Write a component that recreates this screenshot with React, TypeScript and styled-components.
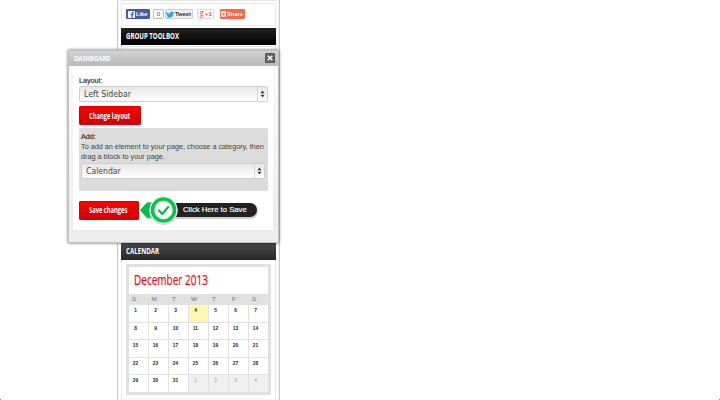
import React from "react";
import styled, { createGlobalStyle } from "styled-components";

const GlobalStyle = createGlobalStyle`
  * { box-sizing: border-box; }
  html, body, #root { height: 100%; margin: 0; }
  body {
    background: #fff;
    overflow: hidden;
    font-family: "Liberation Sans", Arial, sans-serif;
    font-size: 7px;
    color: #444;
  }
`;

const Page = styled.div`
  position: relative;
  height: 400px;
  overflow: hidden;
`;

const Column = styled.main`
  width: 163px;
  height: 400px;
  margin-left: 117px;
  padding: 0 3px;
  border: solid #c9c9c9;
  border-width: 0 1px;
  box-shadow: inset 0 0 2px #ddd;
`;

const PreviousPanel = styled.div`
  height: 1px;
  margin-bottom: 2px;
  background: #e4e4e4;
`;

const ShareBar = styled.div`
  display: flex;
  align-items: flex-start;
  height: 23px;
  margin-bottom: 2px;
  padding: 5px 0 0 4px;
  border: 1px solid #e9e9e9;
`;

const ShareButton = styled.span<{ $w: number; $bg: string; $fg: string; $line: string; $gap: number }>`
  display: flex;
  align-items: center;
  justify-content: center;
  gap: 1px;
  width: ${(p) => p.$w}px;
  height: 10px;
  margin-right: ${(p) => p.$gap}px;
  border: 1px solid ${(p) => p.$line};
  border-radius: 1px;
  background: ${(p) => p.$bg};
  color: ${(p) => p.$fg};
  font-size: 6px;
  font-weight: bold;
  line-height: 9px;
  white-space: nowrap;
`;

const Count = styled(ShareButton)`
  border-radius: 2px;
  font-weight: normal;
`;

const Narrow = styled.span<{ $x: number }>`
  display: inline-block;
  white-space: nowrap;
  transform: scaleX(${(p) => p.$x});
  transform-origin: left center;
`;

const PanelTitle = styled.h2<{ $from: string; $to: string }>`
  height: 17px;
  margin: 0;
  padding-left: 5px;
  background: linear-gradient(${(p) => p.$from}, ${(p) => p.$to});
  color: #fff;
  font: bold 8.3px/15px "Open Sans", sans-serif;
`;

const GroupPanel = styled.section`
  height: 197px;
  margin-top: 1px;
  border: 1px solid #e9e9e9;
`;

const CalendarPanel = styled.section`
  height: 141px;
  padding: 4px 4px 0;
  border: solid #e9e9e9;
  border-width: 0 1px;
`;

const Calendar = styled.div`
  width: 145px;
  height: 131px;
  padding: 3px;
  background: #e1e1e1;
`;

const Month = styled.h3`
  height: 27px;
  margin: 0;
  padding-left: 5px;
  background: #fff;
  color: #f8060c;
  font: 400 14.5px/26px "Open Sans", sans-serif;
  -webkit-text-stroke: 0.2px #f8060c;
`;

const Weekdays = styled.div`
  display: grid;
  grid-template-columns: repeat(7, 1fr);
  gap: 1px;
  height: 11px;
  color: #858585;
  font-size: 6.2px;
  line-height: 10px;
  text-align: center;
  -webkit-text-stroke: 0.15px #858585;
`;

const Weekday = styled.span`
  padding-right: 9px;
`;

const Days = styled.div`
  display: grid;
  grid-template-columns: repeat(7, 1fr);
  grid-auto-rows: 16.6px;
  gap: 1px;
`;

const Day = styled.span<{ $today?: boolean; $other?: boolean }>`
  padding-right: 6px;
  background: ${(p) => (p.$today ? "#fff6b2" : p.$other ? "#f0f0f0" : "#fff")};
  color: ${(p) => (p.$other ? "#999" : "#222")};
  font-size: 4.8px;
  font-weight: ${(p) => (p.$other ? "normal" : "bold")};
  line-height: 11px;
  text-align: center;
`;

const Dialog = styled.section`
  position: absolute;
  left: 68px;
  top: 50px;
  width: 211px;
  height: 193px;
  border: 1px solid #c4c4c4;
  background: linear-gradient(#fafafa, #ececec);
  box-shadow: 0 0 3px rgba(0, 0, 0, 0.6);
`;

const DialogHeader = styled.header`
  display: flex;
  justify-content: space-between;
  height: 15px;
  padding: 0 3px 0 5px;
  background: linear-gradient(#d2d2d2, #b9b9b9);
  color: #fff;
  font: bold 7.8px/15px "Open Sans", sans-serif;
`;

const Close = styled.button`
  display: grid;
  place-items: center;
  width: 10px;
  height: 10px;
  margin-top: 2px;
  padding: 0;
  border: 1px solid #555;
  border-radius: 1px;
  background: #626262;
`;

const DialogBody = styled.div`
  width: 200px;
  height: 164px;
  margin-left: 4px;
  padding: 10px 5px 0 6px;
  background: #fff;
`;

const Label = styled.div`
  height: 9px;
  color: #333;
  font-size: 7.2px;
  line-height: 9px;
  -webkit-text-stroke: 0.2px #333;
`;

const Select = styled.div<{ $w: number; $top: number }>`
  display: flex;
  justify-content: space-between;
  width: ${(p) => p.$w}px;
  height: 16px;
  margin-top: ${(p) => p.$top}px;
  padding-left: 4px;
  border: 1px solid #cecece;
  border-radius: 2px;
  background: linear-gradient(#e7e7e7, #fff);
  color: #444;
  font: 8.6px/14px "DejaVu Sans", sans-serif;
`;

const Arrows = styled.span`
  display: grid;
  place-items: center;
  width: 10px;
  border-left: 1px solid #d5d5d5;
`;

const RedButton = styled.button<{ $w: number }>`
  display: block;
  flex: none;
  width: ${(p) => p.$w}px;
  height: 19px;
  padding: 0 0 0 9px;
  border: 1px solid #d80000;
  border-radius: 1px;
  background: linear-gradient(#fa0000, #d60000);
  color: #fff;
  text-align: left;
  font: bold 8px/16px "Open Sans", sans-serif;
`;

const ChangeRow = styled.div`
  margin-top: 4px;
`;

const AddBox = styled.div`
  width: 189px;
  height: 63px;
  margin-top: 3px;
  padding: 4px 2px;
  border-radius: 2px;
  background: #dcdcdc;
`;

const Hint = styled.p`
  margin: 1px 0 0;
  color: #444;
  font-size: 7.25px;
  line-height: 9.5px;
  white-space: nowrap;
`;

const SaveRow = styled.div`
  display: flex;
  align-items: center;
  height: 32px;
  margin-top: 3px;
`;

const SaveTip = styled.div`
  display: flex;
  align-items: center;
  margin-left: 1px;
`;

const TipMark = styled.svg`
  position: relative;
  z-index: 1;
  flex: none;
  width: 40px;
  height: 32px;
`;

const TipText = styled.span`
  width: 85px;
  height: 14px;
  margin-left: -8px;
  padding-left: 11px;
  border-radius: 0 8px 8px 0;
  background: #222;
  box-shadow: 0 1px 1px 1px #ccc;
  color: #fff;
  font-size: 7.7px;
  line-height: 14px;
  white-space: nowrap;
  -webkit-text-stroke: 0.15px #fff;
`;

const CornerSpeck = styled.i<{ $side: "left" | "right" }>`
  position: absolute;
  bottom: 0;
  ${(p) => p.$side}: 0;
  width: 1px;
  height: 1px;
  background: #888;
`;

const DropArrows = () => (
  <Arrows>
    <svg width="5" height="8" viewBox="0 0 5 8">
      <path d="M.5 3.2 2.5.5l2 2.7zM.5 4.8l2 2.7 2-2.7z" fill="#333" />
    </svg>
  </Arrows>
);

const days = [...Array.from({ length: 31 }, (_, i) => i + 1), 1, 2, 3, 4];

export default function App() {
  return (
    <Page>
      <GlobalStyle />
      <Column>
        <PreviousPanel />
        <ShareBar>
          <ShareButton $w={24} $bg="#435fac" $fg="#fff" $line="#3f58a2" $gap={3}>
            <svg width="7" height="7" viewBox="0 0 7 7">
              <rect width="7" height="7" rx="1" fill="#fff" />
              <path d="M6 1.3H5.2Q4 1.3 4 2.5V7M2.7 3.7H5.7" fill="none" stroke="#435fac" strokeWidth="1.2" />
            </svg>
            <Narrow $x={0.95}>Like</Narrow>
          </ShareButton>
          <Count $w={11} $bg="#fff" $fg="#555" $line="#bbb" $gap={1}>0</Count>
          <ShareButton $w={28} $bg="#eeeeee" $fg="#333" $line="#d0d0d0" $gap={4}>
            <svg width="8" height="7" viewBox="0 0 24 20">
              <path
                d="M1 2c3 4 7 6 11 6 0-7 6-9 10-5l3-1-2 3 2 0-3 3c0 10-12 16-22 9 3 0 5-1 7-2-3 0-4-2-5-4h2C1 10 0 8 0 6l2 1C0 5 0 3 1 2z"
                fill="#20a9ed"
              />
            </svg>
            <Narrow $x={0.96}>Tweet</Narrow>
          </ShareButton>
          <ShareButton $w={17} $bg="#fff" $fg="#df4b3e" $line="#ddd" $gap={6}>
            <svg width="5" height="7" viewBox="0 0 5 8">
              <path
                d="M4.8.6H2.4C.8.6.5 3.3 2.3 3.3 4.2 3.3 4 .6 2.4.6M2.2 3.3l1.4 1.2C5.4 6 4 7.4 2.2 7.4S-.2 4.9 3 4.9"
                fill="none"
                stroke="#df4b3e"
                strokeWidth=".9"
              />
            </svg>
            +1
          </ShareButton>
          <ShareButton $w={25} $bg="#ff6846" $fg="#fff" $line="#ff6846" $gap={0}>
            <svg width="6" height="6" viewBox="0 0 6 6">
              <rect width="6" height="6" rx="1" fill="#fff" />
              <path d="M3 1v4M1 3h4" stroke="#ff6846" strokeWidth="1" />
            </svg>
            <Narrow $x={0.95}>Share</Narrow>
          </ShareButton>
        </ShareBar>
        <PanelTitle $from="#222" $to="#000">
          <Narrow $x={0.735}>GROUP TOOLBOX</Narrow>
        </PanelTitle>
        <GroupPanel />
        <PanelTitle $from="#484848" $to="#292929">
          <Narrow $x={0.745}>CALENDAR</Narrow>
        </PanelTitle>
        <CalendarPanel>
          <Calendar>
            <Month>
              <Narrow $x={0.69}>December 2013</Narrow>
            </Month>
            <Weekdays>
              {["S", "M", "T", "W", "T", "F", "S"].map((d, i) => (
                <Weekday key={i}>{d}</Weekday>
              ))}
            </Weekdays>
            <Days>
              {days.map((d, i) => (
                <Day key={i} $today={i === 3} $other={i > 30}>
                  {d}
                </Day>
              ))}
            </Days>
          </Calendar>
        </CalendarPanel>
      </Column>

      <Dialog>
        <DialogHeader>
          <Narrow $x={0.74}>DASHBOARD</Narrow>
          <Close aria-label="Close">
            <svg width="6" height="6" viewBox="0 0 6 6">
              <path d="m.7.7 4.6 4.6M5.3.7.7 5.3" stroke="#fff" strokeWidth="1.4" />
            </svg>
          </Close>
        </DialogHeader>
        <DialogBody>
          <Label>Layout:</Label>
          <Select $w={189} $top={1}>
            <Narrow $x={0.91}>Left Sidebar</Narrow>
            <DropArrows />
          </Select>
          <ChangeRow>
            <RedButton $w={62}>
              <Narrow $x={0.72}>Change layout</Narrow>
            </RedButton>
          </ChangeRow>
          <AddBox>
            <Label>Add:</Label>
            <Hint>
              To add an element to your page, choose a category, then
              <br />
              drag a block to your page.
            </Hint>
            <Select $w={184} $top={2}>
              <Narrow $x={0.9}>Calendar</Narrow>
              <DropArrows />
            </Select>
          </AddBox>
          <SaveRow>
            <RedButton $w={60}>
              <Narrow $x={0.72}>Save changes</Narrow>
            </RedButton>
            <SaveTip>
              <TipMark viewBox="0 0 40 32">
                <path d="m0 16.7 7-8h9v16H7z" fill="#bbb" />
                <path d="m0 16 7-7.6h9v15.2H7z" fill="#00bf42" />
                <circle cx="23.5" cy="16.5" r="14.2" fill="#c4c4c4" />
                <circle cx="23.5" cy="16" r="13.8" fill="#fff" />
                <circle cx="23.5" cy="16" r="11" fill="#fff" stroke="#00c944" strokeWidth="3.6" />
                <circle cx="23.5" cy="16" r="8.8" fill="none" stroke="#ccc" strokeWidth=".5" />
                <path d="m18.5 16 3.7 4 6.5-7.5" fill="none" stroke="#00b845" strokeWidth="2" />
              </TipMark>
              <TipText>Click Here to Save</TipText>
            </SaveTip>
          </SaveRow>
        </DialogBody>
      </Dialog>
      <CornerSpeck $side="left" />
      <CornerSpeck $side="right" />
    </Page>
  );
}
